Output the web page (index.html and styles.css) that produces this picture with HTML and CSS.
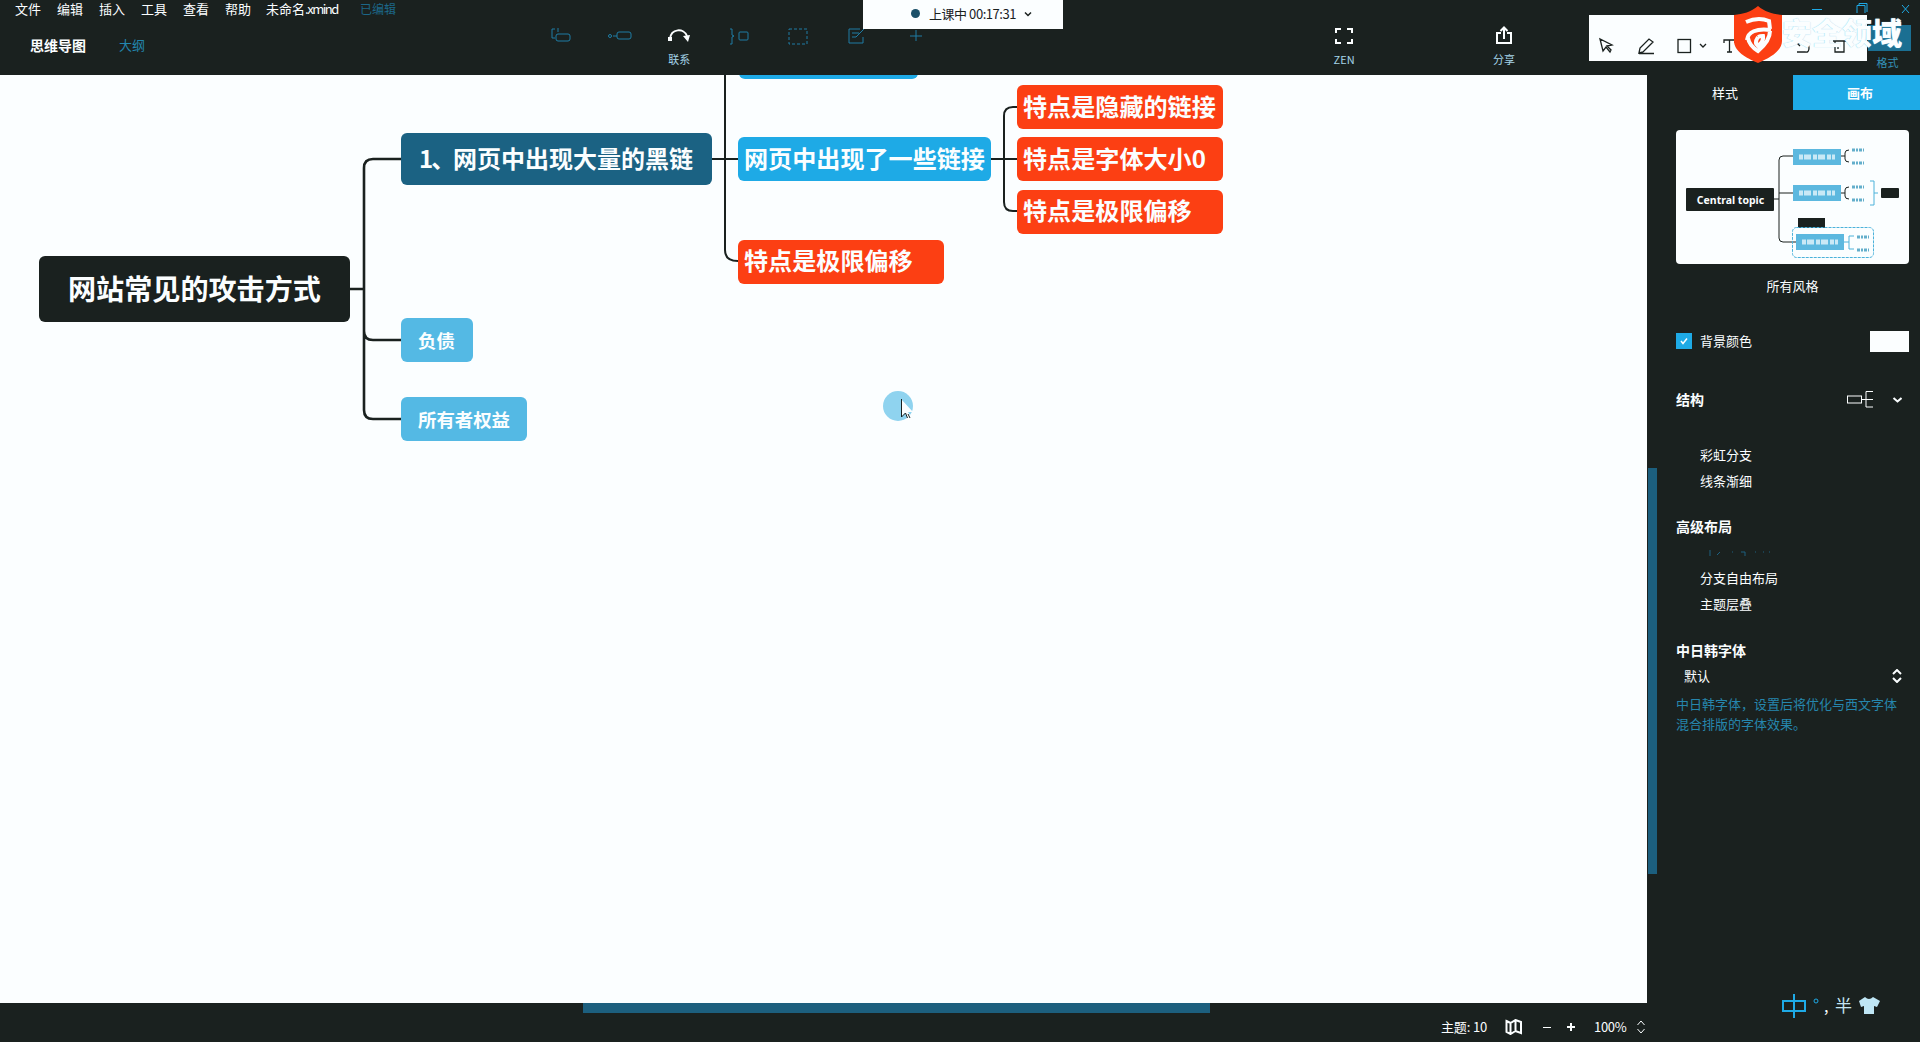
FILE: index.html
```html
<!DOCTYPE html>
<html lang="zh-CN">
<head>
<meta charset="utf-8">
<title>未命名.xmind</title>
<link rel="stylesheet" href="styles.css">
</head>
<body>
<div class="app">
  <header class="header">
    <nav class="menu">
      <span>文件</span><span>编辑</span><span>插入</span><span>工具</span><span>查看</span><span>帮助</span>
      <span class="file">未命名<span class="ext">.xmind</span></span><span class="edited">已编辑</span>
    </nav>
    <div class="bar">
      <div class="views"><b>思维导图</b><span>大纲</span></div>
      <div class="tools">
        <div class="tool dim"><svg width="24" height="24"><path d="M6 5H3v9h3M9 4v4"/><rect x="7" y="10" width="14" height="7" rx="2"/></svg></div>
        <div class="tool dim"><svg width="24" height="24"><circle cx="2" cy="12" r="1.5"/><path d="M5 12h4"/><rect x="9" y="8" width="14" height="7" rx="2"/></svg></div>
        <div class="tool"><svg width="24" height="24"><path class="thick" d="M3 15C4 4 17 4 20 12"/><path class="fill" d="M1 13h4v4H1zM16 12l7-1-2 7z"/></svg><span>联系</span></div>
        <div class="tool dim"><svg width="24" height="24"><path d="M3 5h2v6l2 1-2 1v7H3"/><rect x="12" y="8" width="9" height="8" rx="1"/></svg></div>
        <div class="tool dim"><svg width="24" height="24"><rect class="dash" x="3" y="5" width="18" height="15"/></svg></div>
        <div class="tool dim"><svg width="24" height="24"><path d="M15 5H4v14h14v-6M7 9h7M7 13h4l8-8"/></svg></div>
        <div class="tool dim"><svg width="24" height="24"><path d="M12 6v11M6 12h12"/></svg></div>
      </div>
      <div class="tool zen"><svg width="24" height="24"><path class="thick" d="M4 9V5h5M15 5h5v4M20 15v4h-5M9 19H4v-4"/></svg><span>ZEN</span></div>
      <div class="tool share"><svg width="24" height="24"><path class="thick" d="M9 9H5v10h14V9h-4M12 15V4M8.500 7L12 3.500 15.500 7"/></svg><span>分享</span></div>
    </div>
    <div class="format"><i></i><span>格式</span></div>
    <div class="window-buttons"><svg width="110" height="16"><path d="M2 9.500h10M47 13V5.500h8V13M49 5V3.500h8V12M92 5l7 8M99 5l-7 8"/></svg></div>
  </header>

  <main class="canvas">
    <svg class="links" width="1647" height="928">
      <g class="main-links"><path d="M350 214h14M401 84h-28q-9 0-9 9v242q0 9 9 9h28M364 256q0 9 9 9h28"/></g>
      <g><path d="M712 84h26M725 0v175q0 11 13 11M991 84h27M1018 32h-5q-9 0-9 9v86q0 9 9 9h5"/></g>
    </svg>
    <div class="node blue cut"></div>
    <div class="node root">网站常见的攻击方式</div>
    <div class="node first"><span class="num">1、</span>网页中出现大量的黑链</div>
    <div class="node pale debt">负债</div>
    <div class="node pale equity">所有者权益</div>
    <div class="node blue links-topic">网页中出现了一些链接</div>
    <div class="node red r1">特点是隐藏的链接</div>
    <div class="node red r2">特点是字体大小0</div>
    <div class="node red r3">特点是极限偏移</div>
    <div class="node red r4">特点是极限偏移</div>
    <svg class="pointer" width="34" height="34"><circle cx="16" cy="16" r="15"/><path class="arrow" d="M19 9v18l4-4 3 6 3-2-3-5h5z"/><path class="edge" d="M19.500 9v18l4-4 2 5M26 24l2 4"/></svg>
  </main>

  <aside class="side">
    <div class="track"><i></i></div>
    <div class="panel">
      <div class="tabs"><span>样式</span><b>画布</b></div>
      <div class="body">
        <svg class="preview" width="233" height="134">
          <g class="wire"><path d="M97 69h6M117 26h-10q-4 0-4 4v78q0 4 4 4h13M103 63h14"/><path d="M165 26h4M173 20q-4 0-4 3v6q0 3 4 3M165 63h4M173 57q-4 0-4 3v6q0 3 4 3"/></g>
          <path class="soft" d="M168 112h5M178 106h-5v13h5M194 51h4v24h-4M198 63h4"/>
          <rect class="dark" x="10" y="58" width="88" height="23" rx="1"/>
          <text x="54.500" y="73.500" text-anchor="middle">Central topic</text>
          <g class="topic"><rect x="117" y="19" width="48" height="16"/><rect x="117" y="55" width="48" height="16"/><rect x="120" y="104" width="48" height="16"/></g>
          <path class="scribble" d="M123 27h36M123 63h36M126 112h36"/>
          <path class="tiny" d="M176 20h12M176 33h12M176 57h12M176 70h12M181 107h12M181 120h12"/>
          <rect class="dark" x="205" y="58" width="18" height="10" rx="1"/>
          <rect class="dark" x="122" y="88" width="27" height="10"/>
          <rect class="boundary" x="116.500" y="97.500" width="81" height="30" rx="4"/>
        </svg>
        <div class="style-name">所有风格</div>
        <div class="row background"><i class="check"><svg width="16" height="16"><path d="M5 8l2 2.500 4-5"/></svg></i><span>背景颜色</span><i class="swatch"></i></div>
        <div class="row structure"><b>结构</b>
          <svg width="56" height="20"><rect x="1.500" y="7" width="14" height="7"/><path d="M16 10.500h11M27 2.500h-7v15.500h7"/><path class="thick" d="M47.500 9l4 3.500 4-3.500"/></svg></div>
        <div class="option">彩虹分支</div>
        <div class="option">线条渐细</div>
        <b class="title advanced">高级布局</b>
        <div class="option ghost"><svg width="70" height="8"><path d="M3 1v6M10 6l3-3M25 3h1M34 3h4v4M48 3h1M56 3h1M62 3h1"/></svg></div>
        <div class="option">分支自由布局</div>
        <div class="option">主题层叠</div>
        <b class="title cjk">中日韩字体</b>
        <div class="row select"><span>默认</span><svg width="10" height="14"><path class="thick" d="M1 5l4-4 4 4M1 9l4 4 4-4"/></svg></div>
        <p class="hint">中日韩字体，设置后将优化与西文字体混合排版的字体效果。</p>
      </div>
    </div>
  </aside>

  <footer class="footer">
    <div class="hscroll"></div>
    <div class="status">
      <span class="count">主题: 10</span>
      <svg class="map" width="18" height="16"><path class="thick" d="M1.500 2l4 2 5-3 5.500 2v11l-5.500-2-5 3-4-2zM5.500 4v11M10.500 1v11"/></svg>
      <svg class="minus" width="10" height="10"><path d="M1 5.500h8"/></svg>
      <svg class="plus" width="10" height="10"><path class="thick" d="M1 5h8M5 1v8"/></svg>
      <span class="percent">100%</span>
      <svg class="stepper" width="10" height="14"><path d="M1.500 5L5 1l3.500 4M1.500 9L5 13l3.500-4"/></svg>
    </div>
  </footer>
</div>

<div class="class-timer"><i></i><span>上课中 00:17:31</span><svg width="8" height="6"><path d="M1 1.500l3 3 3-3"/></svg></div>

<div class="annotate">
  <svg width="278" height="46">
    <path d="M11 24l3 12 3-4 4 5 1-2-4-4 5-1zM50 38l1-5 9-9 4 3-10 10zM50 38.500h15"/>
    <rect x="89" y="24.500" width="12.500" height="13"/>
    <path d="M111 29l3 3 3-3M135 28v-3h11v3M140.500 25v12M138 37h5M208 28h8q4 0 4 5t-4 4h-8M211 25l-3 3 3 3M244 26h13M246 26v11h9V26M249 29v5"/>
  </svg>
</div>
<div class="brand">
  <svg width="48" height="57"><path class="shield" d="M24 0C31 6 39 8 48 9v26c0 10-12 17-24 22C12 52 0 45 0 35V9C9 8 17 6 24 0z"/><path class="mark" d="M12 16c9-4 18-3 23-1l1 8M13 34c1-8 9-12 24-10M14 32c1 6 5 10 10 13 7-6 12-12 12-20M24 31q-4 6 0 9 6-5 5-10-3 0-5 1"/></svg>
  <span>安全领域</span>
</div>
<div class="ime">
  <svg width="102" height="28"><path class="zh" d="M4 9h22v10H4zM15 2v24"/><circle cx="37" cy="9" r="2"/><path class="shirt" d="M80 9l6-4q4 4 8 0l7 4-3 6-3-1v8H85v-8l-3 1z"/></svg>
  <span class="comma">,</span><span class="half">半</span>
</div>
</body>
</html>
```
FILE: styles.css
```css
:root {
  --ink: #1a211f;
  --paper: #fbfeff;
  --blue: #1eaae6;
  --red: #fc3f13;
}
* { box-sizing: border-box; }
body {
  margin: 0;
  background: var(--ink);
  color: var(--paper);
  font: 13px/20px "Noto Sans CJK SC", "Noto Sans", sans-serif;
  overflow: hidden;
}
svg { display: block; fill: none; stroke: currentColor; }
.thick { stroke-width: 2; }
.fill { fill: currentColor; stroke: none; }

.app {
  display: grid;
  grid-template: 75px 928px 39px / 1647px 273px;
  width: 1920px;
  height: 1042px;
}

/* Header */
.header { grid-column: 1 / 3; position: relative; }
.menu { display: flex; gap: 16px; height: 20px; padding-left: 15px; line-height: 18px; white-space: nowrap; }
.menu .file { width: 72px; margin-left: -1px; }
.ext { letter-spacing: -1.5px; }
.menu .edited { margin-left: 6px; font-size: 12px; color: #1c6788; }
.bar { display: flex; height: 55px; }
.views { display: flex; align-items: center; gap: 33px; width: 531px; padding: 0 0 5px 30px; }
.views b { font-size: 14px; }
.views span { color: #2386ae; }
.tools { display: grid; grid-template-columns: repeat(7, 59.3px); }
.tool { display: flex; flex-direction: column; align-items: center; padding-top: 4px; font-size: 11px; line-height: 22px; }
.tool span { color: #a5d5e9; }
.dim { color: #1e7da5; }
.dash { stroke-dasharray: 3 2; }
.zen { width: 60px; margin-left: 368px; }
.share { width: 60px; margin-left: 100px; }
.format { position: absolute; right: 9px; top: 25px; width: 43px; padding-right: 4px; text-align: center; font-size: 11px; line-height: 22px; color: #3490b5; }
.format i { display: block; width: 43px; height: 26px; background: #1b6f92; }
.window-buttons { position: absolute; left: 1810px; top: 0; color: var(--blue); }

/* Mind map */
.canvas { position: relative; overflow: hidden; background: var(--paper); }
.links { position: absolute; left: 0; top: 0; color: var(--ink); stroke-width: 2; }
.main-links { stroke-width: 2.6; }
.node {
  position: absolute;
  display: flex;
  align-items: center;
  height: 44px;
  border-radius: 6px;
  padding: 0 0 3px 6px;
  font-size: 24.100px;
  font-weight: 700;
  white-space: nowrap;
}
.root { left: 39px; top: 181px; width: 311px; height: 66px; padding-left: 29px; font-size: 28.100px; background: var(--ink); }
.first { left: 401px; top: 58px; width: 311px; height: 52px; padding-left: 18px; font-size: 24px; background: #1b6283; }
.num { width: 34px; letter-spacing: -2px; }
.pale { left: 401px; padding: 0 0 1px 17px; font-size: 18.400px; background: #54b9e4; }
.debt { top: 243px; width: 72px; }
.equity { top: 322px; width: 126px; }
.blue { left: 738px; background: var(--blue); }
.cut { top: -40px; left: 739px; width: 179px; }
.links-topic { top: 62px; width: 253px; }
.red { left: 1017px; width: 206px; background: var(--red); }
.r1 { top: 10px; }
.r2 { top: 62px; }
.r3 { top: 114.500px; }
.r4 { left: 738px; top: 164.500px; }
.pointer { position: absolute; left: 882px; top: 315px; stroke: none; }
.pointer circle { fill: #8fd3ef; }
.pointer .arrow { fill: var(--paper); }
.pointer .edge { stroke: var(--ink); }

/* Format panel */
.side { display: flex; padding-left: 1px; }
.track { width: 9px; padding-top: 393px; }
.track i { display: block; height: 406px; background: #1c5f7e; }
.panel { flex: 1; }
.tabs { display: flex; height: 35px; text-align: center; line-height: 35px; }
.tabs span { width: 136px; }
.tabs b { flex: 1; padding-left: 7px; background: var(--blue); }
.body { display: flex; flex-direction: column; padding: 20px 11px 0 19px; }
.preview { background: var(--paper); border-radius: 4px; color: var(--ink); }
.preview .dark { fill: var(--ink); stroke: none; }
.preview text { fill: var(--paper); stroke: none; font: 700 10.500px "Noto Sans", sans-serif; }
.topic { fill: #5cb8df; stroke: none; }
.soft, .boundary { stroke: #4cb2da; }
.boundary { stroke-dasharray: 3 1; }
.scribble { stroke: #c9e9f6; stroke-width: 5; stroke-dasharray: 4 1 7 2; }
.tiny { stroke: #63aecb; stroke-width: 3; stroke-dasharray: 3 1 2 1; }
.style-name { margin-top: 12px; text-align: center; }
.row { display: flex; align-items: center; }
.background { height: 22px; margin-top: 34px; }
.background span { flex: 1; padding-left: 8px; }
.check { width: 16px; height: 16px; background: var(--blue); }
.check svg { stroke-width: 1.500; }
.swatch { width: 39px; height: 21px; background: var(--paper); }
.structure { justify-content: space-between; height: 20px; margin: 37px 7px 33px 0; font-size: 14px; }
.option { height: 26px; padding-left: 24px; line-height: 26px; }
.ghost { padding: 10px 0 0 31px; color: #1d6080; }
.title { font-size: 14px; }
.advanced { margin: 22px 0 3px; }
.cjk { margin-top: 23px; }
.select { justify-content: space-between; height: 20px; margin-top: 6px; padding: 0 7px 0 8px; }
.hint { width: 222px; margin: 8px 0 0; color: #2686ad; }

/* Status bar */
.footer { grid-column: 1 / 3; }
.hscroll { width: 627px; height: 10px; margin-left: 583px; background: #1c5f7e; }
.status { display: flex; align-items: center; height: 28px; padding-left: 1441px; }
.count { width: 64px; letter-spacing: -0.150px; }
.minus { margin-left: 19px; }
.plus { margin-left: 14px; }
.percent { width: 42px; margin-left: 18px; letter-spacing: -0.300px; }

/* Overlays */
.class-timer {
  position: absolute; left: 863px; top: 0;
  display: flex; align-items: center;
  width: 200px; height: 29px; padding: 0 0 2px 48px;
  background: var(--paper); color: var(--ink);
  white-space: nowrap;
}
.class-timer i { width: 9px; height: 9px; margin-right: 9px; border-radius: 50%; background: #1b5069; }
.class-timer span { width: 87px; letter-spacing: -0.450px; }
.class-timer svg { margin-left: 8px; stroke-width: 1.500; }
.annotate { position: absolute; left: 1589px; top: 15px; background: var(--paper); color: var(--ink); }
.annotate svg { stroke-width: 1.300; }
.brand { position: absolute; left: 1734px; top: 6px; display: flex; white-space: nowrap; }
.brand span { font-size: 30px; font-weight: 900; line-height: 50px; text-shadow: 0 0 1px #7cc9e8; }
.shield { fill: var(--red); stroke: none; }
.mark { stroke: var(--paper); stroke-width: 4; }
.ime { position: absolute; left: 1779px; top: 992px; }
.ime svg { color: var(--blue); }
.ime .zh { stroke-width: 2; }
.ime .shirt { fill: #bfe6f5; stroke: none; }
.comma { position: absolute; left: 45px; top: 3px; font-size: 16px; }
.half { position: absolute; left: 56px; top: 3px; font-size: 17px; color: #c5e5f2; }
```
